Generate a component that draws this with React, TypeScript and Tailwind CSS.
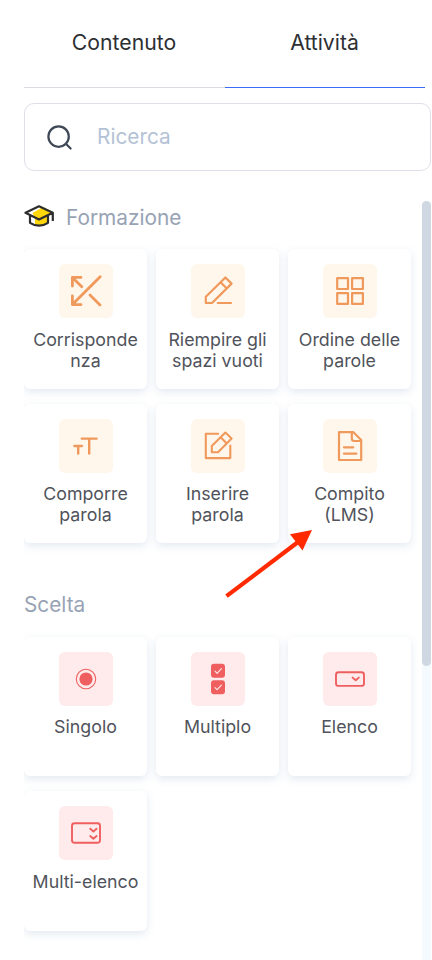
import React from "react";

type Tone = "orange" | "red";

const tones: Record<Tone, string> = {
  orange: "bg-[#fff7eb] text-[#f0995c]",
  red: "bg-[#ffebeb] text-[#ef5f5f]",
};

type Activity = {
  label: string;
  icon: React.ReactNode;
};

const MatchIcon = (
  <g strokeWidth="2.8">
    <path d="M13.4 22V13.4H22M13.4 13.4L22.8 22.8" />
    <path d="M41.2 12.8L13.4 40.6M13.4 32V40.6H22M31 31L41 41" />
  </g>
);

const PencilIcon = (
  <g strokeWidth="2.2">
    <path d="M14.8 39V32.8L34.4 13.5L40.6 19.6L21 39ZM29.6 18.3L35.8 24.5" />
    <path d="M26.8 39H40" />
  </g>
);

const BlocksIcon = (
  <g strokeWidth="2.2">
    <rect x="14.2" y="14.2" width="10.8" height="10.8" />
    <rect x="29.1" y="14.2" width="10.8" height="10.8" />
    <rect x="14.2" y="29.1" width="10.8" height="10.8" />
    <rect x="29.1" y="29.1" width="10.8" height="10.8" />
  </g>
);

const LettersIcon = (
  <path strokeWidth="2.4" d="M22.8 19.6H37.6M30.2 19.6V34.6M15.4 27H22.8M19.2 27V34.6" />
);

const EditIcon = (
  <g strokeWidth="2.1">
    <path d="M27.2 14.8H14.8V39.1H39.3V26.6" />
    <path d="M20.8 33.3V27L34.4 13.5L40.6 19.6L27 33.3ZM29.6 18.3L35.8 24.5" />
  </g>
);

const DocumentIcon = (
  <g strokeWidth="2.2">
    <path d="M16 13.2H30.4L38.2 21V41H16Z" />
    <path d="M28.8 13.4V19.6Q28.8 22 31.2 22H38" />
    <path d="M20.9 28.3H30.2M20.9 34.6H33.4" />
  </g>
);

const RadioIcon = (
  <>
    <circle cx="27" cy="27" r="9.7" strokeWidth="1.1" />
    <circle cx="27" cy="27" r="6.6" fill="currentColor" stroke="none" />
  </>
);

const ChecksIcon = (
  <>
    <rect x="20" y="11.8" width="14" height="14" rx="3" fill="currentColor" stroke="none" />
    <rect x="20" y="28.2" width="14" height="14" rx="3" fill="currentColor" stroke="none" />
    <path d="M24 19.2L26.1 21.3L30.4 16.7M24 35.6L26.1 37.7L30.4 33.1" stroke="#ffebeb" strokeWidth="1.1" />
  </>
);

const SelectIcon = (
  <g strokeWidth="1.9">
    <rect x="13" y="20.3" width="28" height="13.6" rx="2.5" />
    <path d="M29.6 25.6L32.7 28.3L35.8 25.6" />
  </g>
);

const MultiSelectIcon = (
  <g strokeWidth="1.9">
    <rect x="13" y="17.2" width="28" height="19.6" rx="2.5" />
    <path d="M31.2 22.8L34.4 25.5L37.6 22.8M31.2 30L34.4 32.7L37.6 30" />
  </g>
);

const training: Activity[] = [
  { label: "Corrispondenza", icon: MatchIcon },
  { label: "Riempire gli spazi vuoti", icon: PencilIcon },
  { label: "Ordine delle parole", icon: BlocksIcon },
  { label: "Comporre parola", icon: LettersIcon },
  { label: "Inserire parola", icon: EditIcon },
  { label: "Compito (LMS)", icon: DocumentIcon },
];

const choice: Activity[] = [
  { label: "Singolo", icon: RadioIcon },
  { label: "Multiplo", icon: ChecksIcon },
  { label: "Elenco", icon: SelectIcon },
  { label: "Multi-elenco", icon: MultiSelectIcon },
];

const ActivityGrid = ({ items, tone }: { items: Activity[]; tone: Tone }) => (
  <div className="grid grid-cols-[123px_123px_123px] auto-rows-[139.5px] gap-x-[9px] gap-y-[15px]">
    {items.map((item) => (
      <button
        key={item.label}
        className="flex flex-col items-center rounded-md bg-white px-2 pt-[15px] shadow-[0_3px_9px_rgba(70,110,160,0.15)]"
      >
        <span className={`block size-[54px] shrink-0 rounded-md ${tones[tone]}`}>
          <svg viewBox="0 0 54 54" className="size-[54px]" fill="none" stroke="currentColor" strokeLinecap="round" strokeLinejoin="round">
            {item.icon}
          </svg>
        </span>
        <span className="mt-[10.8px] w-[107px] text-center text-[17.8px] leading-[21px] wrap-anywhere text-[#50535b]">
          {item.label}
        </span>
      </button>
    ))}
  </div>
);

const GraduationCap = () => (
  <svg viewBox="0 0 30 22" className="-mt-[4px] h-[22px] w-[30px]" fill="none">
    <path d="M8.5 8L19 2L28 6.5L24 11V18Q17 22.5 11 19V13.5Z" fill="#ffd60a" />
    <path d="M1.5 7.8L15 1.3L28.8 7.8L15 14.4ZM6 10.5V17.8Q15 23.6 24 17.8V10.5M28.8 7.8V16" stroke="#2d2d2d" strokeWidth="2.2" strokeLinejoin="round" />
  </svg>
);

export default function App() {
  return (
    <main className="relative flex h-[960px] w-[432px] flex-col overflow-hidden bg-white pl-6 font-['Inter',sans-serif]">
      <nav className="grid h-[88px] shrink-0 grid-cols-[201px_200px] text-[21.2px] text-[#2d2f33]">
        <button className="border-b border-b-[#d9dbe0] pr-px pb-[2px]">Contenuto</button>
        <button className="border-b border-b-[#3b6cf6] pr-px pb-[2px]">Attività</button>
      </nav>

      <label className="mt-[15px] flex h-[68px] w-[407px] shrink-0 items-center rounded-[10px] border border-[#dfdfeb] pl-[22px]">
        <svg viewBox="0 0 26 26" className="mt-px size-[26px] text-[#3f4857]" fill="none" stroke="currentColor" strokeWidth="2.2" strokeLinecap="round">
          <circle cx="11.6" cy="11.6" r="10.2" />
          <path d="M18.9 18.8L23.6 23.5" />
        </svg>
        <span className="ml-[24px] text-[20.8px] text-[#b4c2d6]">Ricerca</span>
      </label>

      <div className="mt-[30px] flex min-h-0 flex-1">
        <div className="w-[398px] overflow-hidden">
          <section>
            <h2 className="flex h-[34px] items-center text-[20.8px] text-[#97a3b4]">
              <GraduationCap />
              <span className="ml-3">Formazione</span>
            </h2>
            <div className="mt-[14px]">
              <ActivityGrid items={training} tone="orange" />
            </div>
          </section>
          <section className="mt-[44.6px]">
            <h2 className="flex h-[34px] items-center text-[20.8px] text-[#97a3b4]">Scelta</h2>
            <div className="mt-[15px]">
              <ActivityGrid items={choice} tone="red" />
            </div>
          </section>
        </div>
        <div className="w-[9px] rounded-t-full bg-[#f5fafe]">
          <div className="h-[465px] rounded-full bg-[#cfd8e2]" />
        </div>
      </div>

      {/* pointer to the LMS assignment card */}
      <svg viewBox="0 0 90 70" className="pointer-events-none absolute top-[528px] left-[224px] h-[70px] w-[90px]">
        <path d="M2.5 68.2L78 11" stroke="#ff2a00" strokeWidth="4.2" />
        <path d="M88 2L66 6.3L78.5 22.5Z" fill="#ff2a00" />
      </svg>
    </main>
  );
}
